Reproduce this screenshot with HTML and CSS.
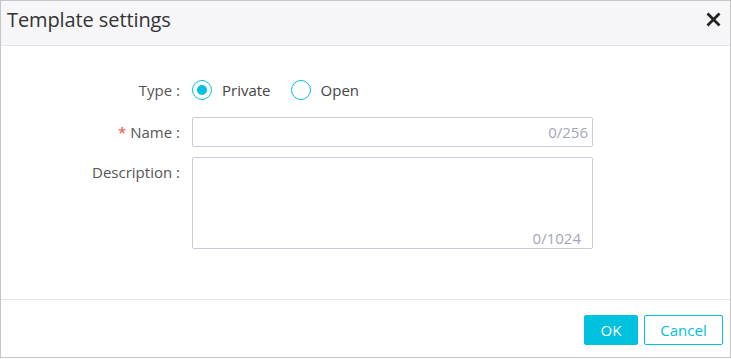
FILE: index.html
```html
<!DOCTYPE html>
<html>
<head>
<meta charset="utf-8">
<link rel="stylesheet" href="styles.css">
</head>
<body>
<div class="dialog">
  <div class="header">
    <div class="title">Template settings</div>
    <div class="close">
      <svg width="15" height="15" viewBox="0 0 15 15"><path d="M1.5 1.5 L13.5 13.5 M13.5 1.5 L1.5 13.5" stroke="#222" stroke-width="2.8" stroke-linecap="butt"/></svg>
    </div>
  </div>
  <div class="body">
    <div class="form">
      <div class="label row-type">Type :</div>
      <div class="field row-type radios">
        <label class="radio"><span class="circle checked"></span><span class="rtext">Private</span></label>
        <label class="radio"><span class="circle"></span><span class="rtext">Open</span></label>
      </div>
      <div class="label"><span class="req">*</span> Name :</div>
      <div class="field"><div class="input"><span class="count">0/256</span></div></div>
      <div class="label label-top">Description :</div>
      <div class="field"><div class="textarea"><span class="count">0/1024</span></div></div>
    </div>
  </div>
  <div class="footer">
    <button class="btn primary">OK</button>
    <button class="btn secondary">Cancel</button>
  </div>
</div>
</body>
</html>
```

FILE: styles.css
```css
html, body {
  margin: 0;
  padding: 0;
  background: #fff;
}
body {
  font-family: "Open Sans", "Liberation Sans", sans-serif;
  color: #333;
}
.dialog {
  box-sizing: border-box;
  width: 731px;
  height: 358px;
  border: 1px solid #c6c6c6;
  display: flex;
  flex-direction: column;
}
.header {
  height: 44px;
  background: #f7f7f9;
  border-bottom: 1px solid #e4e4ec;
  display: flex;
  align-items: center;
  justify-content: space-between;
  padding: 0 9px 0 6px;
}
.title {
  font-size: 20px;
  color: #333;
  margin-top: -8px;
  letter-spacing: -0.1px;
}
.close {
  display: flex;
  margin-top: -8px;
}
.body {
  flex: 1;
  padding-top: 29px;
}
.form {
  display: grid;
  grid-template-columns: 179px 401px;
  column-gap: 12px;
  row-gap: 10px;
  font-size: 15px;
}
.label {
  text-align: right;
  color: #555;
  display: flex;
  align-items: center;
  justify-content: flex-end;
  height: 30px;
}
.label-top {
  align-items: flex-start;
  padding-top: 5px;
  height: auto;
}
.req {
  color: #f5484a;
  margin-right: 4px;
}
.row-type {
  height: 30px;
  margin-bottom: 2px;
}
.radios {
  display: flex;
  align-items: center;
  gap: 0;
}
.radio {
  display: flex;
  align-items: center;
  margin-right: 20px;
}
.circle {
  box-sizing: border-box;
  width: 20px;
  height: 20px;
  border: 1.5px solid #00c1de;
  border-radius: 50%;
  display: flex;
  align-items: center;
  justify-content: center;
}
.circle.checked::after {
  content: "";
  width: 10px;
  height: 10px;
  border-radius: 50%;
  background: #00c1de;
}
.rtext {
  margin-left: 10px;
  color: #444;
}
.input, .textarea {
  box-sizing: border-box;
  border: 1px solid #c9cbdb;
  border-radius: 2px;
  display: flex;
  justify-content: flex-end;
  padding-right: 4px;
}
.input {
  height: 30px;
  align-items: center;
}
.textarea {
  height: 92px;
  align-items: flex-end;
  padding-right: 11px;
  padding-bottom: 0;
}
.count {
  color: #a3a6b7;
  font-size: 15px;
}
.footer {
  height: 58px;
  flex: none;
  border-top: 1px solid #e4e4ec;
  display: flex;
  justify-content: flex-end;
  align-items: flex-start;
  padding: 15px 7px 0 0;
  box-sizing: border-box;
  gap: 6px;
}
.btn {
  box-sizing: border-box;
  height: 30px;
  font-family: "Open Sans", "Liberation Sans", sans-serif;
  font-size: 15px;
  border-radius: 2px;
  padding: 0;
  cursor: pointer;
}
.primary {
  width: 54px;
  background: #00c1de;
  color: #fff;
  border: 1px solid #00c1de;
}
.secondary {
  width: 79px;
  background: #fff;
  color: #00c1de;
  border: 1px solid #00c1de;
}
```
